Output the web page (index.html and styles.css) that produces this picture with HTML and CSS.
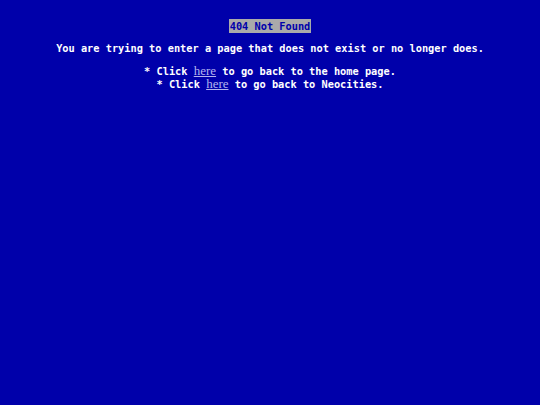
FILE: index.html
```html
<!DOCTYPE html>
<html>
<head>
<meta charset="utf-8">
<link rel="stylesheet" href="styles.css">
</head>
<body>
<div class="page">
  <p class="title"><span class="badge">404 Not Found</span></p>
  <p class="msg">You are trying to enter a page that does not exist or no longer does.</p>
  <div class="links">
    <p>* Click <a href="#">here</a> to go back to the home page.</p>
    <p>* Click <a href="#">here</a> to go back to Neocities.</p>
  </div>
</div>
</body>
</html>
```
FILE: styles.css
```css
html, body {
  margin: 0;
  padding: 0;
  background: #0000aa;
  height: 100%;
}
.page {
  padding-top: 20px;
  color: #ffffff;
  font-family: "DejaVu Sans Mono", "Liberation Mono", monospace;
  font-weight: bold;
  font-size: 10.3px;
  line-height: 13px;
  text-align: center;
}
.page p {
  margin: 0;
}
.title {
  margin-bottom: 9px !important;
}
.badge {
  background: #aaaaaa;
  color: #0000aa;
  padding: 1px 1px;
}
.msg {
  margin-bottom: 10px !important;
}
.links a {
  color: #b4b4ee;
  font-family: "Liberation Serif", "DejaVu Serif", serif;
  font-weight: normal;
  font-size: 13px;
  line-height: 8px;
}
```
